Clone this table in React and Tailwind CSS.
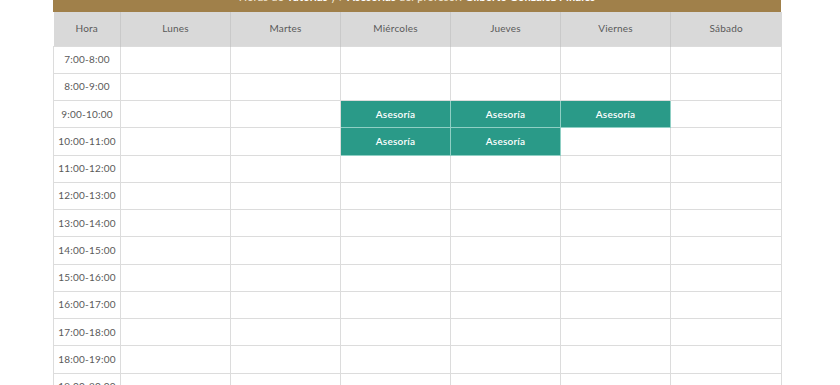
import React from 'react';

const days = ['Lunes', 'Martes', 'Miércoles', 'Jueves', 'Viernes', 'Sábado'];

const hours = [
    '7:00-8:00', '8:00-9:00', '9:00-10:00', '10:00-11:00', '11:00-12:00', '12:00-13:00',
    '13:00-14:00', '14:00-15:00', '15:00-16:00', '16:00-17:00', '17:00-18:00', '18:00-19:00',
    '19:00-20:00',
];

// hour index -> day index -> label
const slots = {
    2: { 2: 'Asesoría', 3: 'Asesoría', 4: 'Asesoría' },
    3: { 2: 'Asesoría', 3: 'Asesoría' },
};

export default function App() {
    return (
        <div className="h-[385px] overflow-hidden bg-white" style={{ fontFamily: 'Lato, "Open Sans", sans-serif' }}>
            <div className="mx-[53px] w-[728px]">
                {/* Banner (cut by the top edge) */}
                <div className="mt-[-18px] h-[30px] bg-[#a0804a] flex items-center justify-center text-[11px] text-[#f3ead8]">
                    <span className="mt-[1px] tracking-[0.2px]">
                        Horas de <b className="text-white">Tutorías</b> y / <b className="text-white">Asesorías</b> del profesor: <b className="text-white">Gilberto González Pinales</b>
                    </span>
                </div>

                <table className="w-full table-fixed border-collapse text-[10px] tracking-[0.2px] text-[#5a5a5a]">
                    <colgroup>
                        <col className="w-[67px]" />
                        <col className="w-[110px]" />
                        <col className="w-[110px]" />
                        <col className="w-[110px]" />
                        <col className="w-[110px]" />
                        <col className="w-[110px]" />
                        <col className="w-[111px]" />
                    </colgroup>
                    <thead>
                        <tr className="h-[34px] bg-[#d9d9d9]">
                            <th className="font-normal border-r border-[#c9c9c9]">Hora</th>
                            {days.map((d, i) => (
                                <th key={d} className={`font-normal ${i < days.length - 1 ? 'border-r border-[#c9c9c9]' : ''}`}>{d}</th>
                            ))}
                        </tr>
                    </thead>
                    <tbody>
                        {hours.map((h, r) => (
                            <tr key={h} className="h-[27.25px]">
                                <td className="text-center border border-[#dcdcdc]">{h}</td>
                                {days.map((d, c) => {
                                    const label = slots[r] && slots[r][c];
                                    return label ? (
                                        <td key={d} className="text-center bg-[#2a9a88] text-white font-semibold border border-[#8fcfc4]">{label}</td>
                                    ) : (
                                        <td key={d} className="border border-[#dcdcdc]"></td>
                                    );
                                })}
                            </tr>
                        ))}
                    </tbody>
                </table>
            </div>
        </div>
    );
}
